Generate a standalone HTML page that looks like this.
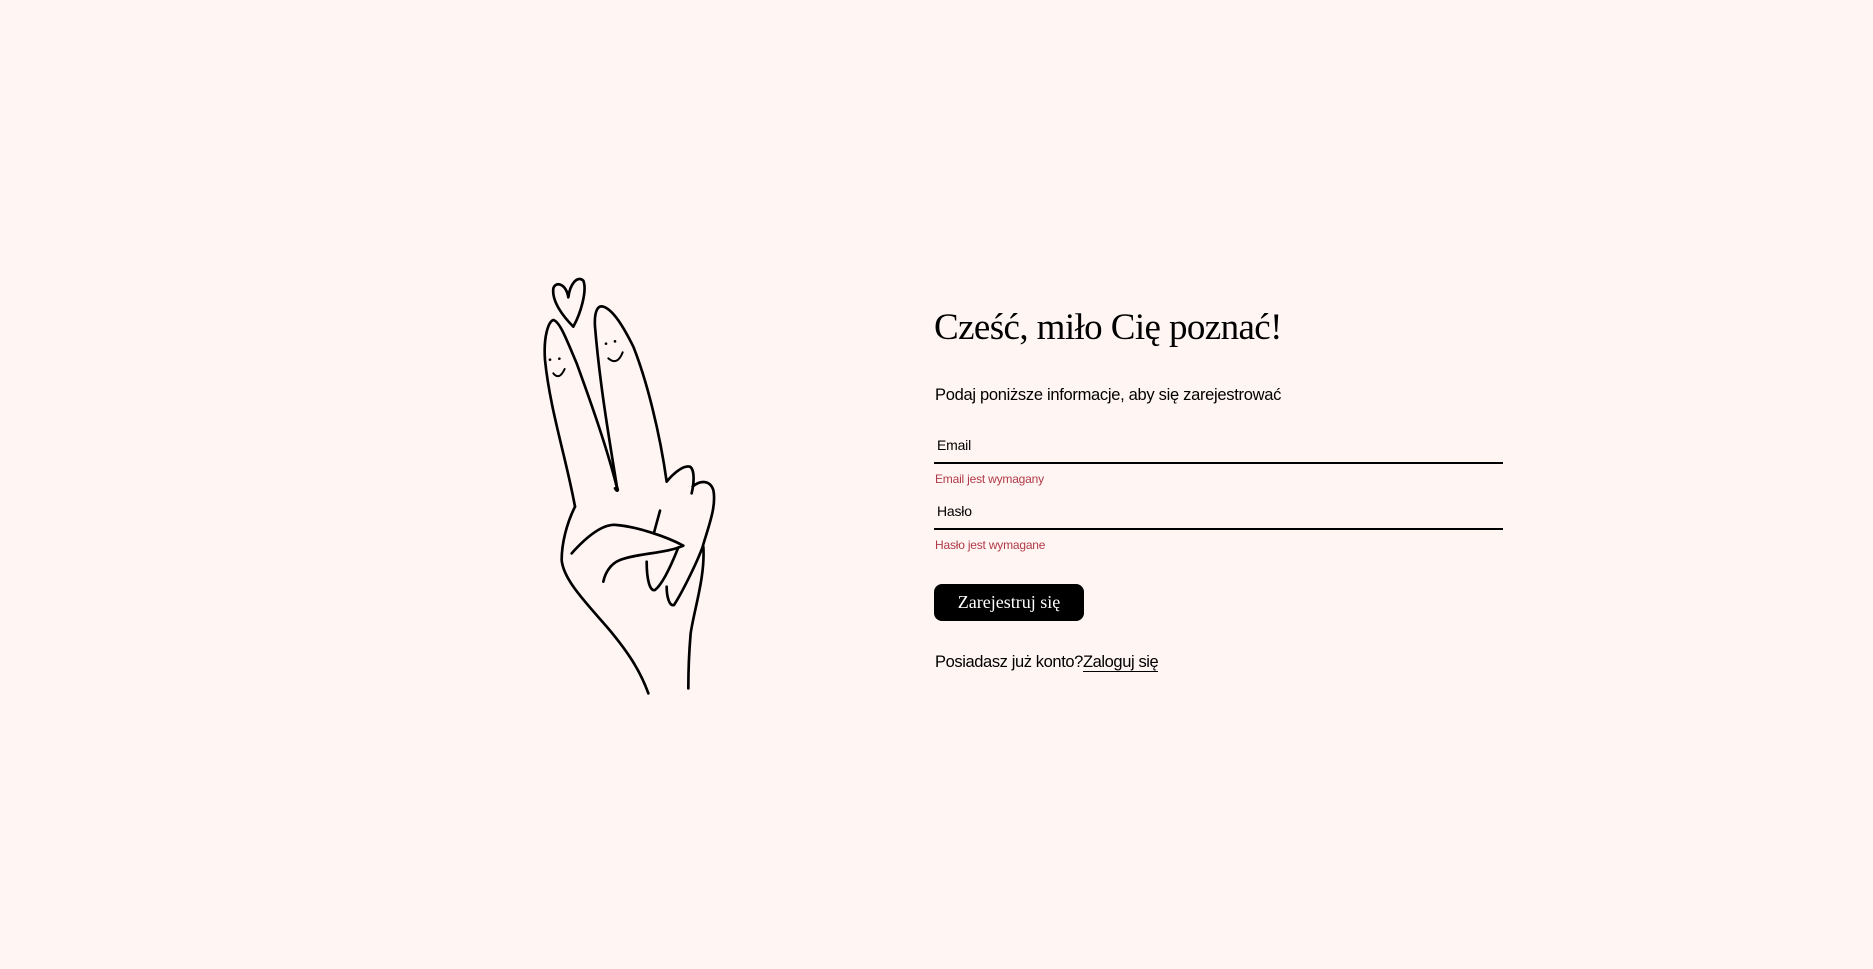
<!DOCTYPE html>
<html><head><meta charset="utf-8"><style>
html,body{margin:0;padding:0;background:#fff5f3;width:1873px;height:969px;overflow:hidden;font-family:"Liberation Sans",sans-serif;color:#000}
.a{position:absolute;white-space:nowrap}
h1{position:absolute;left:934px;top:305px;margin:0;font-family:"Liberation Serif",serif;font-weight:400;font-size:37px;line-height:46px;letter-spacing:-0.6px}
.sub{left:935px;top:385px;font-size:16.5px;line-height:20px;letter-spacing:-0.3px}
.lab{left:937px;font-size:14px;line-height:16px;letter-spacing:-0.2px}
.line{position:absolute;left:934px;width:569px;height:2px;background:#000}
.err{left:935px;font-size:12px;line-height:14px;color:#b03a48;letter-spacing:-0.2px}
.btn{position:absolute;left:934px;top:584px;width:150px;height:37px;background:#000;border-radius:8px;color:#fff;font-family:"Liberation Serif",serif;font-size:18px;line-height:37px;text-align:center}
.foot{left:935px;top:652px;font-size:16.5px;line-height:20px;letter-spacing:-0.4px}
.foot span{border-bottom:1px solid #000}
</style></head><body>
<svg style="position:absolute;left:520px;top:260px" width="220" height="450" viewBox="0 0 660 1350" fill="none" stroke="#000" stroke-width="8" stroke-linecap="round" stroke-linejoin="round">
<path d="M160,200 C130,170 95,125 100,85 C108,62 138,72 145,112 C150,72 172,45 190,62 C202,92 182,160 160,200 Z"/>
<path d="M165,740 C140,600 90,450 75,300 C70,230 85,185 100,180 C120,185 140,240 170,310 C210,420 260,560 290,680 C298,695 290,695 285,685"/>
<path d="M292,688 C270,550 240,380 225,200 C222,150 235,135 250,140 C280,150 310,200 340,260 C380,360 420,520 440,665 C460,640 490,615 510,620 C525,630 522,670 515,700"/>
<path d="M518,680 C540,660 570,660 580,690 C590,740 565,800 548,860 C530,910 485,1000 462,1035 C448,1040 440,1010 440,980"/>
<path d="M550,860 C556,950 522,1050 512,1120 C505,1200 505,1250 505,1285"/>
<path d="M165,740 C140,790 125,850 125,900 C130,960 200,1030 260,1100 C320,1170 360,1230 385,1300"/>
<path d="M155,880 C200,830 250,790 290,795 C350,800 440,830 490,857 C440,880 350,880 300,900 C270,912 255,940 250,965"/>
<path d="M420,752 L402,818"/>
<path d="M380,905 C380,960 390,995 405,990 C430,970 460,900 475,862"/>
<circle cx="90" cy="299" r="4" fill="#000" stroke="none"/><circle cx="118" cy="296" r="4" fill="#000" stroke="none"/>
<path d="M100,340 Q118,362 134,327" stroke-width="6"/>
<circle cx="258" cy="251" r="4" fill="#000" stroke="none"/><circle cx="285" cy="244" r="4" fill="#000" stroke="none"/>
<path d="M265,295 Q292,318 308,277" stroke-width="6"/>
</svg>
<h1>Cześć, miło Cię poznać!</h1>
<div class="a sub">Podaj poniższe informacje, aby się zarejestrować</div>
<div class="a lab" style="top:437px">Email</div>
<div class="line" style="top:462px"></div>
<div class="a err" style="top:472px">Email jest wymagany</div>
<div class="a lab" style="top:503px">Hasło</div>
<div class="line" style="top:528px"></div>
<div class="a err" style="top:538px">Hasło jest wymagane</div>
<div class="btn">Zarejestruj się</div>
<div class="a foot">Posiadasz już konto?<span>Zaloguj się</span></div>
</body></html>
